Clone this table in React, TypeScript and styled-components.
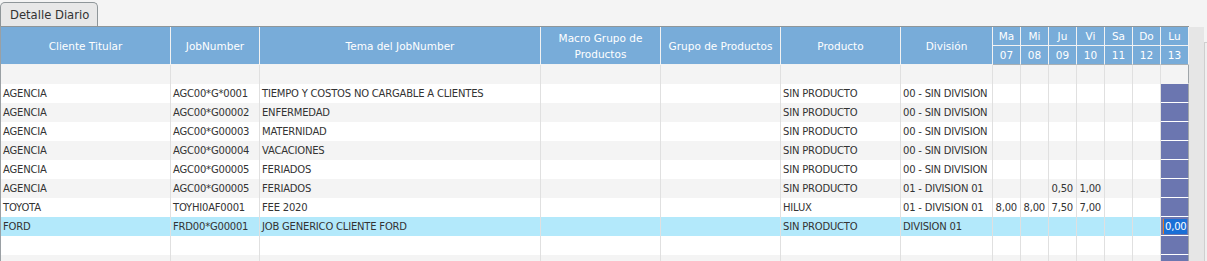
import React from "react"
import styled, { createGlobalStyle } from "styled-components"

const GlobalStyle = createGlobalStyle`
  html, body {
    margin: 0;
    padding: 0;
    background: #f4f4f4;
    font-family: "DejaVu Sans", Verdana, sans-serif;
  }
`

const Page = styled.div`
  width: 1207px;
  height: 261px;
  overflow: hidden;
  display: flex;
  flex-direction: column;
`

const TabStrip = styled.div`
  height: 26px;
  box-sizing: border-box;
  padding-top: 2px;
  display: flex;
`

const Tab = styled.div`
  height: 24px;
  box-sizing: border-box;
  padding: 0 8px 0 9px;
  display: flex;
  align-items: center;
  background: #e8e8e8;
  border: 1px solid #8f9699;
  border-bottom: none;
  border-radius: 5px 5px 0 0;
  color: #333;
  font-size: 11.6px;
`

const GridArea = styled.div`
  display: flex;
  align-items: flex-start;
`

const Table = styled.table`
  width: 1189px;
  table-layout: fixed;
  border-collapse: separate;
  border-spacing: 0;
  border-top: 1px solid #8f9699;
  border-left: 1px solid #9aa0a4;
  font-size: 10px;
  letter-spacing: -0.2px;
  color: #333;
`

const Th = styled.th<{ $h?: number }>`
  box-sizing: border-box;
  height: ${(p) => p.$h ?? 19}px;
  padding: 0 2px;
  background: #78acd9;
  color: #fff;
  font-weight: normal;
  font-size: 10.5px;
  letter-spacing: 0;
  line-height: 16px;
  text-align: center;
  border-right: 1px solid #f2f2f2;
  border-bottom: 1px solid #f2f2f2;
  overflow: hidden;
  white-space: normal;
`

const HeadBottom = styled.tr`
  th {
    border-bottom-color: #a9b0b4;
  }
`

const Row = styled.tr<{ $alt: boolean; $active?: boolean }>`
  background: ${(p) => (p.$active ? "#b3e9fb" : p.$alt ? "#f4f4f4" : "#ffffff")};
`

const Td = styled.td<{ $num?: boolean }>`
  box-sizing: border-box;
  height: 19px;
  padding: 0 ${(p) => (p.$num ? "3px" : "2px")} 0 2px;
  border-right: 1px solid #e0e0e0;
  white-space: nowrap;
  overflow: hidden;
  text-align: ${(p) => (p.$num ? "right" : "left")};
  vertical-align: middle;
`

const LuCell = styled.td<{ $filled: boolean }>`
  box-sizing: border-box;
  height: 19px;
  padding: 0 1px 0 2px;
  background: ${(p) => (p.$filled ? "#6b76b0" : "transparent")};
  border-bottom: 1px solid ${(p) => (p.$filled ? "#ffffff" : "transparent")};
  border-right: 1px solid #a0a6aa;
  text-align: right;
`

const Selected = styled.span`
  display: inline-block;
  background: #1a6fd6;
  color: #fff;
  line-height: 15px;
  padding: 0 1px;
  border-left: 1px solid #e07b2a;
`

const Scrollbar = styled.div`
  width: 15px;
  height: 235px;
  margin-top: 1px;
  background: #e6e6e6;
`

const Edge = styled.div`
  flex: 1;
  height: 219px;
  margin-top: 16px;
  background: #f0f0f0;
  border-left: 1px solid #cfcfcf;
  border-top: 1px solid #cfcfcf;
`

const widths = [170, 89, 281, 120, 120, 120, 92, 28, 28, 28, 28, 28, 28, 28]
const days = [
  ["Ma", "07"],
  ["Mi", "08"],
  ["Ju", "09"],
  ["Vi", "10"],
  ["Sa", "11"],
  ["Do", "12"],
  ["Lu", "13"],
]

type Item = {
  cliente: string
  job: string
  tema: string
  producto: string
  division: string
  hours: string[]
  active?: boolean
  lu?: string
}

const rows: Item[] = [
  { cliente: "AGENCIA", job: "AGC00*G*0001", tema: "TIEMPO Y COSTOS NO CARGABLE A CLIENTES", producto: "SIN PRODUCTO", division: "00 - SIN DIVISION", hours: [] },
  { cliente: "AGENCIA", job: "AGC00*G00002", tema: "ENFERMEDAD", producto: "SIN PRODUCTO", division: "00 - SIN DIVISION", hours: [] },
  { cliente: "AGENCIA", job: "AGC00*G00003", tema: "MATERNIDAD", producto: "SIN PRODUCTO", division: "00 - SIN DIVISION", hours: [] },
  { cliente: "AGENCIA", job: "AGC00*G00004", tema: "VACACIONES", producto: "SIN PRODUCTO", division: "00 - SIN DIVISION", hours: [] },
  { cliente: "AGENCIA", job: "AGC00*G00005", tema: "FERIADOS", producto: "SIN PRODUCTO", division: "00 - SIN DIVISION", hours: [] },
  { cliente: "AGENCIA", job: "AGC00*G00005", tema: "FERIADOS", producto: "SIN PRODUCTO", division: "01 - DIVISION 01", hours: ["", "", "0,50", "1,00"] },
  { cliente: "TOYOTA", job: "TOYHI0AF0001", tema: "FEE 2020", producto: "HILUX", division: "01 - DIVISION 01", hours: ["8,00", "8,00", "7,50", "7,00"] },
  { cliente: "FORD", job: "FRD00*G00001", tema: "JOB GENERICO CLIENTE FORD", producto: "SIN PRODUCTO", division: "DIVISION 01", hours: [], active: true, lu: "0,00" },
]

const mainCols = [
  "Cliente Titular",
  "JobNumber",
  "Tema del JobNumber",
  "Macro Grupo de Productos",
  "Grupo de Productos",
  "Producto",
  "División",
]

function EmptyRow({ alt, filled }: { alt: boolean; filled: boolean }) {
  return (
    <Row $alt={alt}>
      {widths.slice(0, 13).map((_, i) => (
        <Td key={i} />
      ))}
      <LuCell $filled={filled} />
    </Row>
  )
}

export default function App() {
  return (
    <Page>
      <GlobalStyle />
      <TabStrip>
        <Tab>Detalle Diario</Tab>
      </TabStrip>
      <GridArea>
        <Table>
          <colgroup>
            {widths.map((w, i) => (
              <col key={i} style={{ width: w }} />
            ))}
          </colgroup>
          <thead>
            <tr>
              {mainCols.map((c) => (
                <Th key={c} rowSpan={2} $h={38} style={undefined}>
                  {c}
                </Th>
              ))}
              {days.map(([d]) => (
                <Th key={d}>{d}</Th>
              ))}
            </tr>
            <HeadBottom>
              {days.map(([d, n]) => (
                <Th key={d}>{n}</Th>
              ))}
            </HeadBottom>
          </thead>
          <tbody>
            <EmptyRow alt filled={false} />
            {rows.map((r, i) => (
              <Row key={i} $alt={i % 2 === 1} $active={r.active}>
                <Td>{r.cliente}</Td>
                <Td>{r.job}</Td>
                <Td>{r.tema}</Td>
                <Td />
                <Td />
                <Td>{r.producto}</Td>
                <Td>{r.division}</Td>
                {[0, 1, 2, 3, 4, 5].map((d) => (
                  <Td key={d} $num>
                    {r.hours[d] ?? ""}
                  </Td>
                ))}
                <LuCell $filled>{r.lu && <Selected>{r.lu}</Selected>}</LuCell>
              </Row>
            ))}
            <EmptyRow alt={false} filled />
            <EmptyRow alt filled />
          </tbody>
        </Table>
        <Scrollbar />
        <Edge />
      </GridArea>
    </Page>
  )
}
